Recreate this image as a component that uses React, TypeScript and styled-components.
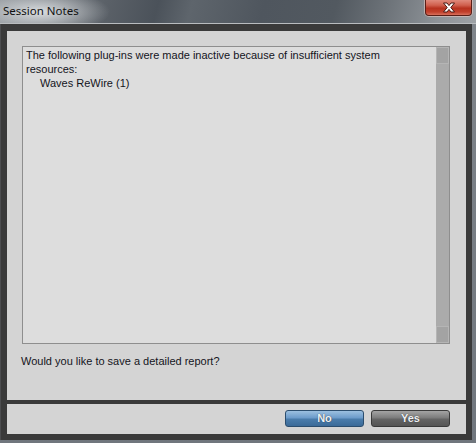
import React from "react";
import styled, { createGlobalStyle } from "styled-components";

const Global = createGlobalStyle`
  html, body { margin: 0; padding: 0; }
  body { width: 476px; height: 443px; overflow: hidden; background: #767b81; }
`;

const Window = styled.div`
  width: 476px;
  height: 443px;
  display: flex;
  flex-direction: column;
  background: linear-gradient(180deg, #80858b 0%, #70767d 100%);
`;

const TitleBar = styled.div`
  height: 23px;
  display: flex;
  align-items: flex-start;
  justify-content: space-between;
  border-bottom: 1px solid #b9bcbf;
  background:
    radial-gradient(ellipse 70px 22px at 40px 12px, rgba(235, 238, 240, 0.85), rgba(235, 238, 240, 0) 100%),
    linear-gradient(105deg, #8d9297 0%, #5b6168 22%, #4b525a 33%, #5e656c 40%, #4f565e 55%, #525960 70%, #6b7177 80%, #8e9398 92%, #9ea2a6 100%);
`;

const Title = styled.span`
  font-family: "Noto Sans", "Open Sans", sans-serif;
  font-size: 11.5px;
  line-height: 16px;
  color: #111;
  padding: 3px 0 0 3px;
`;

const CloseButton = styled.div`
  width: 47px;
  height: 16px;
  margin-right: 4px;
  box-sizing: border-box;
  border: 1px solid #5a1e16;
  border-top: none;
  border-radius: 0 0 4px 4px;
  box-shadow: 0 0 0 1px rgba(230, 200, 195, 0.6);
  background: linear-gradient(180deg, #e08a7c 0%, #d0604e 35%, #b7321f 55%, #c2402c 80%, #d8705c 100%);
  display: flex;
  align-items: center;
  justify-content: center;
`;

const Frame = styled.div`
  width: 472px;
  box-sizing: border-box;
  background: #3a3a3a;
  border-left: 1px solid #4c4d4f;
  padding: 7px 6px 6px 6px;
  display: flex;
  flex-direction: column;
  gap: 4px;
`;

const ContentPanel = styled.div`
  height: 369px;
  box-sizing: border-box;
  background: #d4d4d4;
  padding: 15px 16px 0 15px;
  display: flex;
  flex-direction: column;
`;

const TextBox = styled.div`
  height: 298px;
  box-sizing: border-box;
  border: 1px solid #8e8e8e;
  background: #dddddd;
  display: flex;
`;

const Notes = styled.div`
  flex: 1;
  padding: 1px 3px;
  font-family: "Liberation Sans", Arial, sans-serif;
  font-size: 11px;
  line-height: 14px;
  color: #14141c;
`;

const Indented = styled.div`
  padding-left: 14px;
`;

const Scrollbar = styled.div`
  width: 13px;
  display: flex;
  flex-direction: column;
  background: #ababab;
`;

const ScrollButton = styled.div`
  height: 17px;
  box-sizing: border-box;
  background: #a3a3a3;
  border: 1px solid #b5b5b5;
`;

const ScrollTrack = styled.div`
  flex: 1;
`;

const Question = styled.div`
  margin: 10px 0 0 -1px;
  font-family: "Liberation Sans", Arial, sans-serif;
  font-size: 11px;
  line-height: 14px;
  color: #14141c;
`;

const ButtonPanel = styled.div`
  height: 30px;
  box-sizing: border-box;
  background: #d4d4d4;
  display: flex;
  align-items: center;
  justify-content: flex-end;
  gap: 7px;
  padding: 0 16px 2px 0;
`;

const DialogButton = styled.button<{ $primary?: boolean }>`
  width: 79px;
  height: 17px;
  padding: 0;
  box-sizing: border-box;
  border-radius: 3px;
  border: 1px solid ${(p) => (p.$primary ? "#2b4d6e" : "#3a3a3a")};
  background: ${(p) =>
    p.$primary
      ? "linear-gradient(180deg, #9cc0e0 0%, #6d9ccb 45%, #4a7cab 55%, #3b6a98 100%)"
      : "linear-gradient(180deg, #a4a4a4 0%, #7c7c7c 45%, #646464 55%, #555555 100%)"};
  font-family: "Liberation Sans", Arial, sans-serif;
  font-weight: bold;
  font-size: 11px;
  line-height: 15px;
  color: #eef1f4;
  text-shadow: 0 0 1px rgba(0, 0, 0, 0.7);
  cursor: pointer;
`;

export default function App() {
  return (
    <>
      <Global />
      <Window>
        <TitleBar>
          <Title>Session Notes</Title>
          <CloseButton>
            <svg width="14" height="11" viewBox="0 0 14 11">
              <path
                d="M1.5 1 H5 L7 3.6 L9 1 H12.5 L8.8 5.5 L12.5 10 H9 L7 7.4 L5 10 H1.5 L5.2 5.5 Z"
                fill="#ffffff"
                stroke="#4a1a14"
                strokeWidth="1"
                strokeLinejoin="round"
              />
            </svg>
          </CloseButton>
        </TitleBar>
        <Frame>
          <ContentPanel>
            <TextBox>
              <Notes>
                The following plug-ins were made inactive because of insufficient system resources:
                <Indented>Waves ReWire (1)</Indented>
              </Notes>
              <Scrollbar>
                <ScrollButton />
                <ScrollTrack />
                <ScrollButton />
              </Scrollbar>
            </TextBox>
            <Question>Would you like to save a detailed report?</Question>
          </ContentPanel>
          <ButtonPanel>
            <DialogButton $primary>No</DialogButton>
            <DialogButton>Yes</DialogButton>
          </ButtonPanel>
        </Frame>
      </Window>
    </>
  );
}
